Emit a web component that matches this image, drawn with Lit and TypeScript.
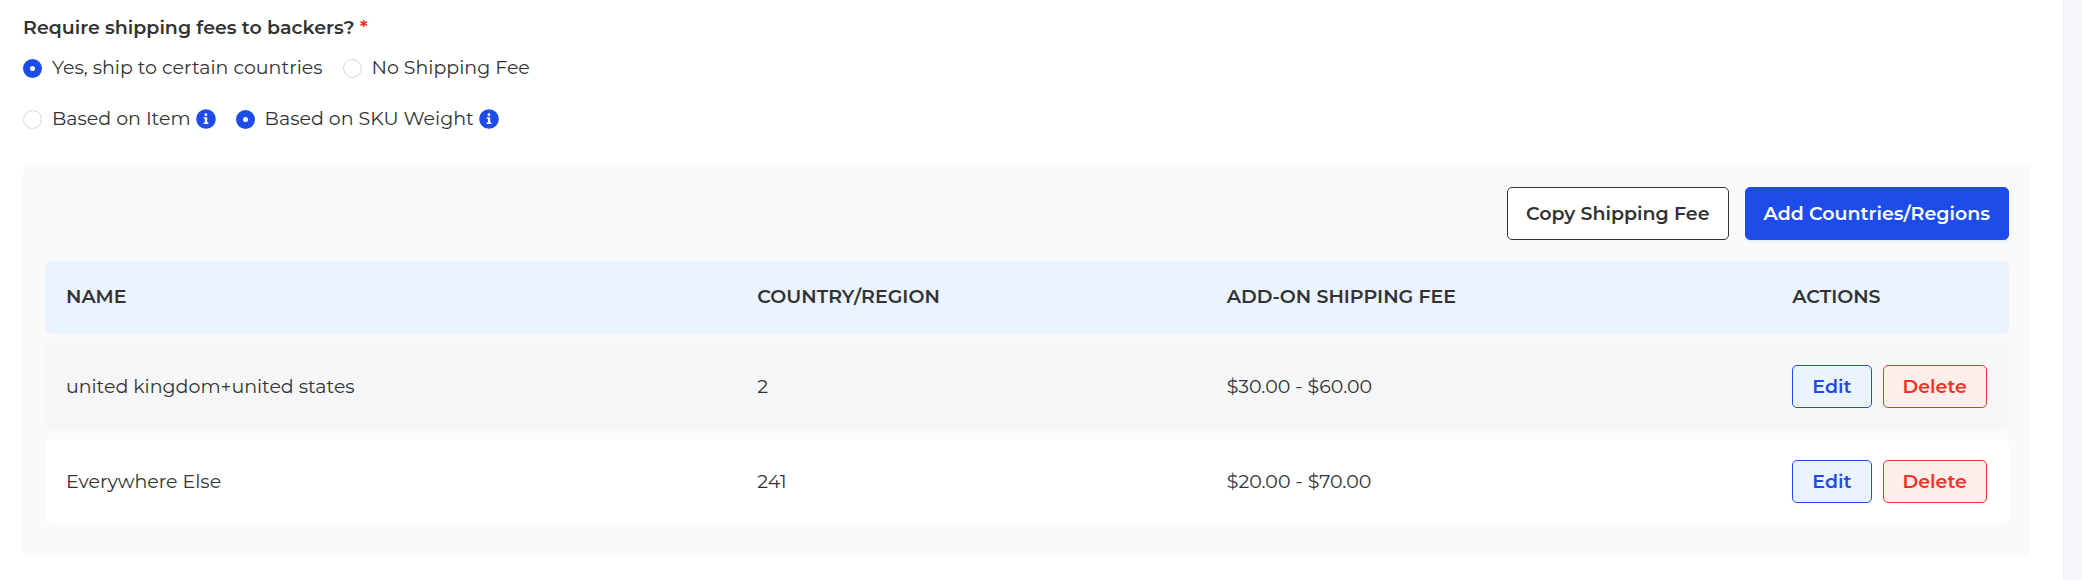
import { LitElement, html, css } from "lit";
import { customElement, property, state } from "lit/decorators.js";

interface ShippingRate {
  name: string;
  regions: number;
  fee: string;
}

@customElement("info-tip")
class InfoTip extends LitElement {
  @property() label = "";

  static styles = css`
    :host {
      display: inline-flex;
    }
    .tip {
      display: block;
      width: 20px;
      height: 20px;
      padding: 0;
      border: 0;
      background: none;
      cursor: pointer;
    }
    .glyph {
      display: block;
      width: 20px;
      height: 20px;
    }
  `;

  render() {
    return html`
      <button class="tip" type="button" aria-label=${this.label}>
        <svg class="glyph" viewBox="0 0 20 20" aria-hidden="true">
          <circle cx="10" cy="10" r="9.8" fill="#1d4ce9" />
          <circle cx="9.9" cy="5.7" r="1.35" fill="#fff" />
          <path d="M7.7 8.2h3.5v5.4h1.2v1.5H7.6v-1.5h1.3V9.7H7.7z" fill="#fff" />
        </svg>
      </button>
    `;
  }
}

@customElement("app-root")
class AppRoot extends LitElement {
  @state() private scope = "certain";
  @state() private basis = "weight";

  private rates: ShippingRate[] = [
    { name: "united kingdom+united states", regions: 2, fee: "$30.00 - $60.00" },
    { name: "Everywhere Else", regions: 241, fee: "$20.00 - $70.00" },
  ];

  static styles = css`
    :host {
      display: block;
      padding-right: 19px;
      background: #f5f7fa;
      color: #333;
      font: 400 19px/24px Montserrat, Inter, sans-serif;
    }
    * {
      box-sizing: border-box;
    }
    .card {
      min-height: 100vh;
      padding: 16px 32px 24px 23px;
      background: #fff;
      box-shadow: 0 0 3px rgba(0, 0, 0, 0.08);
    }
    .question {
      margin: 0 0 16px;
      font-size: 19px;
      line-height: 24px;
      font-weight: 600;
    }
    .required {
      color: #ed3424;
    }
    .choices {
      display: flex;
      flex-wrap: wrap;
      gap: 12px 20px;
      margin-bottom: 27px;
    }
    .choices.last {
      margin-bottom: 34px;
    }
    .choice {
      display: flex;
      align-items: center;
      gap: 5px;
    }
    .option {
      display: flex;
      align-items: center;
      gap: 10px;
      cursor: pointer;
    }
    .radio {
      appearance: none;
      flex: none;
      width: 19px;
      height: 19px;
      margin: 0;
      border: 1px solid #d9d9d9;
      border-radius: 50%;
      background: #fff;
      cursor: pointer;
    }
    .radio:checked {
      border: 7px solid #1d4ce9;
    }
    .panel {
      padding: 22px;
      border-radius: 6px;
      background: #fafafa;
    }
    .toolbar {
      display: flex;
      flex-wrap: wrap;
      justify-content: flex-end;
      gap: 16px;
      margin-bottom: 11px;
    }
    .button {
      padding: 0 18px;
      border: 1px solid;
      border-radius: 5px;
      font: inherit;
      font-weight: 600;
      white-space: nowrap;
      cursor: pointer;
    }
    .large {
      height: 53px;
    }
    .small {
      height: 43px;
      padding: 0 19px;
    }
    .outline {
      border-color: #333;
      background: #fff;
      color: #333;
    }
    .primary {
      border-color: #1d4ce9;
      background: #1d4ce9;
      color: #fff;
      box-shadow: 0 3px 0 #ebf3ff;
    }
    .edit {
      border-color: #1d4ce9;
      background: #ebf3ff;
      color: #1d4ce9;
    }
    .delete {
      border-color: #ed3424;
      background: #fdeeec;
      color: #ed3424;
    }
    .rates {
      width: 100%;
      table-layout: fixed;
      border-collapse: separate;
      border-spacing: 0 10px;
    }
    .name-col {
      width: 35.2%;
    }
    .region-col {
      width: 23.9%;
    }
    .fee-col {
      width: 28.8%;
    }
    .head {
      height: 73px;
      padding: 0;
      background: #ebf3ff;
      font-weight: 600;
      text-align: left;
    }
    .head-text {
      display: block;
      padding: 2px 20px 3px;
      border-left: 1px solid #e8eff7;
    }
    .head:first-child .head-text {
      border-color: transparent;
    }
    .cell {
      height: 85px;
      padding: 0 21px;
      background: #fff;
    }
    .row:nth-child(odd) .cell {
      background: #f5f6f8;
    }
    .head:first-child,
    .cell:first-child {
      border-radius: 6px 0 0 6px;
    }
    .head:last-child,
    .cell:last-child {
      border-radius: 0 6px 6px 0;
    }
    .actions {
      display: flex;
      gap: 11px;
    }
  `;

  private option(group: "scope" | "basis", value: string, text: string) {
    return html`
      <label class="option">
        <input
          class="radio"
          type="radio"
          name=${group}
          .checked=${this[group] === value}
          @change=${() => (this[group] = value)}
        />
        <span>${text}</span>
      </label>
    `;
  }

  render() {
    return html`
      <main class="card">
        <h2 class="question" id="question">
          Require shipping fees to backers? <span class="required">*</span>
        </h2>
        <div class="choices" role="radiogroup" aria-labelledby="question">
          <div class="choice">${this.option("scope", "certain", "Yes, ship to certain countries")}</div>
          <div class="choice">${this.option("scope", "none", "No Shipping Fee")}</div>
        </div>
        <div class="choices last" role="radiogroup" aria-label="Fee basis">
          <div class="choice">
            ${this.option("basis", "item", "Based on Item")}
            <info-tip label="About item based fees"></info-tip>
          </div>
          <div class="choice">
            ${this.option("basis", "weight", "Based on SKU Weight")}
            <info-tip label="About weight based fees"></info-tip>
          </div>
        </div>
        <section class="panel">
          <div class="toolbar">
            <button class="button large outline" type="button">Copy Shipping Fee</button>
            <button class="button large primary" type="button">Add Countries/Regions</button>
          </div>
          <table class="rates">
            <colgroup>
              <col class="name-col" />
              <col class="region-col" />
              <col class="fee-col" />
              <col />
            </colgroup>
            <thead>
              <tr>
                ${["NAME", "COUNTRY/REGION", "ADD-ON SHIPPING FEE", "ACTIONS"].map(
                  (title) => html`<th class="head" scope="col"><span class="head-text">${title}</span></th>`
                )}
              </tr>
            </thead>
            <tbody>
              ${this.rates.map(
                (rate) => html`
                  <tr class="row">
                    <td class="cell">${rate.name}</td>
                    <td class="cell">${rate.regions}</td>
                    <td class="cell">${rate.fee}</td>
                    <td class="cell">
                      <div class="actions">
                        <button class="button small edit" type="button">Edit</button>
                        <button class="button small delete" type="button">Delete</button>
                      </div>
                    </td>
                  </tr>
                `
              )}
            </tbody>
          </table>
        </section>
      </main>
    `;
  }
}
